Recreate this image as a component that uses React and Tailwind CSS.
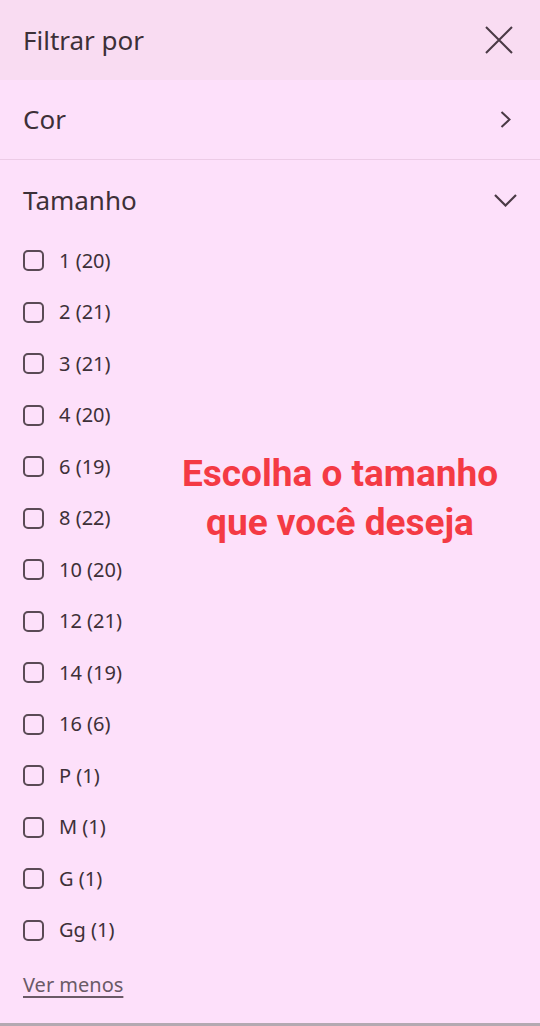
import React from 'react';

const sizes = ['1 (20)', '2 (21)', '3 (21)', '4 (20)', '6 (19)', '8 (22)', '10 (20)', '12 (21)', '14 (19)', '16 (6)', 'P (1)', 'M (1)', 'G (1)', 'Gg (1)'];

export default function App() {
  return (
    <div className="relative w-[540px] h-[1026px] overflow-hidden bg-[#fde0fa] text-[#3d3038] font-['Noto_Sans',sans-serif] border-b-[3px] border-[#b3a9b1]">
      {/* Header */}
      <div className="flex items-center justify-between h-[80px] pl-[23px] pr-[27px] bg-[#f9dcf2]">
        <span className="text-[26px]">Filtrar por</span>
        <svg width="28" height="28" viewBox="0 0 28 28" fill="none" stroke="#4a3a45" strokeWidth="2">
          <path d="M1 1L27 27M27 1L1 27" />
        </svg>
      </div>

      {/* Cor */}
      <div className="flex items-center justify-between h-[80px] pl-[23px] pr-[29px] border-b border-[#eccbe6]">
        <span className="text-[26px]">Cor</span>
        <svg width="11" height="17" viewBox="0 0 11 17" fill="none" stroke="#4a3a45" strokeWidth="2">
          <path d="M1.5 1L9.5 8.5L1.5 16" />
        </svg>
      </div>

      {/* Tamanho */}
      <div className="flex items-center justify-between h-[80px] pl-[23px] pr-[23px]">
        <span className="text-[26px]">Tamanho</span>
        <svg width="23" height="13" viewBox="0 0 23 13" fill="none" stroke="#4a3a45" strokeWidth="2.2">
          <path d="M1 1L11.5 11.5L22 1" />
        </svg>
      </div>

      <div className="flex flex-col pl-[23px] -mt-[5px]">
        {sizes.map((s) => (
          <label key={s} className="flex items-center h-[51.5px] gap-[15px]">
            <span className="w-[21px] h-[21px] rounded-[5px] border-2 border-[#5a4a55]" />
            <span className="text-[20px]">{s}</span>
          </label>
        ))}
        <a className="mt-[14px] text-[20px] text-[#6a5a66] underline underline-offset-[4px] decoration-[2px] self-start">Ver menos</a>
      </div>

      <div className="absolute left-[170px] top-[449px] w-[340px] text-center font-['Roboto',sans-serif] font-bold text-[37px] leading-[49px] text-[#f43a44]">
        Escolha o tamanho
        <br />
        que você deseja
      </div>
    </div>
  );
}
